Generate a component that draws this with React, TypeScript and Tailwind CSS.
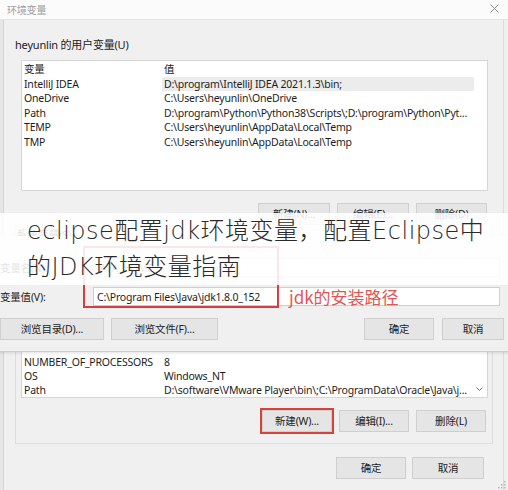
import React from "react";

type BtnProps = { children: React.ReactNode; className?: string };

function Btn({ children, className = "" }: BtnProps) {
  return (
    <div
      className={`flex items-center justify-center h-[22px] bg-[#e5e5e5] border border-[#cfcfcf] text-[10.5px] text-[#222] whitespace-nowrap ${className}`}
    >
      {children}
    </div>
  );
}

type Row = { k: string; v: string; sel?: boolean };

const userRows: Row[] = [
  { k: "IntelliJ IDEA", v: "D:\\program\\IntelliJ IDEA 2021.1.3\\bin;", sel: true },
  { k: "OneDrive", v: "C:\\Users\\heyunlin\\OneDrive" },
  { k: "Path", v: "D:\\program\\Python\\Python38\\Scripts\\;D:\\program\\Python\\Pyt..." },
  { k: "TEMP", v: "C:\\Users\\heyunlin\\AppData\\Local\\Temp" },
  { k: "TMP", v: "C:\\Users\\heyunlin\\AppData\\Local\\Temp" },
];

const sysRows: Row[] = [
  { k: "NUMBER_OF_PROCESSORS", v: "8" },
  { k: "OS", v: "Windows_NT" },
  { k: "Path", v: "D:\\software\\VMware Player\\bin\\;C:\\ProgramData\\Oracle\\Java\\j..." },
];

export default function App() {
  return (
    <div className="relative w-[508px] h-[490px] overflow-hidden bg-[#f0f0f0] text-[10.5px] leading-[16px] tracking-[-0.2px] text-[#1e1e1e] font-['Noto_Sans','Noto_Sans_CJK_SC',sans-serif]">
      {/* Title bar */}
      <div className="h-[20px] bg-[#fbfbfb] border-b border-[#e4e4e4] flex items-center justify-between pl-[7px] pr-[9px]">
        <span className="text-[#a0a0a0] text-[10px]">环境变量</span>
        <svg width="9" height="9" viewBox="0 0 9 9" className="mt-[-3px]">
          <path d="M0.5 0.5 L8.5 8.5 M8.5 0.5 L0.5 8.5" stroke="#8a8a8a" strokeWidth="1" />
        </svg>
      </div>

      {/* Window body */}
      <div className="h-[470px] flex flex-col shadow-[inset_3px_0_0_#e6e6e6,inset_4px_0_0_#d5d5d5,inset_-4px_0_0_#f0f0f0,inset_-5px_0_0_#dadada]">
        <div className="pl-[15px] pt-[17px] h-[40px] text-[11px] text-[#222]">heyunlin 的用户变量(U)</div>

        {/* User list */}
        <div className="ml-[21px] w-[467px] h-[131px] bg-white border border-[#d6d6d6] pt-[1px]">
          <div className="flex h-[14.5px] items-center">
            <div className="w-[142px] pl-[2px]">变量</div>
            <div>值</div>
          </div>
          {userRows.map((r) => (
            <div key={r.k} className="flex h-[14.5px] items-center">
              <div className="w-[140px] pl-[2px] whitespace-nowrap">{r.k}</div>
              <div
                className={`w-[312px] pl-[2px] h-full flex items-center whitespace-nowrap ${r.sel ? "bg-[#ececec]" : ""}`}
              >
                {r.v}
              </div>
            </div>
          ))}
        </div>

        {/* User buttons */}
        <div className="mt-[12px] flex justify-end pr-[21px] gap-[7px]">
          <Btn className="w-[72px]">新建(N)...</Btn>
          <Btn className="w-[72px]">编辑(E)...</Btn>
          <Btn className="w-[71px]">删除(D)</Btn>
        </div>

        {/* System section frame */}
        <div className="mx-[15px] border-x border-b border-[#dcdcdc] flex flex-col">
          <div className="h-[20px] pt-[2px] text-[11px] text-[#222]">系统变量(S)</div>
          <div className="ml-[5px] w-[467px] h-[153px] bg-white border border-[#d6d6d6] flex flex-col justify-end relative">
            {sysRows.map((r) => (
              <div key={r.k} className="flex h-[14px] items-center">
                <div className="w-[142px] pl-[2px] whitespace-nowrap">{r.k}</div>
                <div className="whitespace-nowrap">{r.v}</div>
              </div>
            ))}
            <svg width="7" height="5" viewBox="0 0 7 5" className="absolute right-[4px] bottom-[5px]">
              <path d="M0.5 0.5 L3.5 3.5 L6.5 0.5" stroke="#777" strokeWidth="1" fill="none" />
            </svg>
          </div>
          <div className="mt-[12px] mb-[11px] flex justify-end pr-[6px] gap-[7px]">
            <Btn className="w-[70px] ring-2 ring-[#d8423d]">新建(W)...</Btn>
            <Btn className="w-[70px]">编辑(I)...</Btn>
            <Btn className="w-[70px]">删除(L)</Btn>
          </div>
        </div>

        {/* Bottom buttons */}
        <div className="mt-[13px] flex justify-end pr-[24px] gap-[6px]">
          <Btn className="w-[70px]">确定</Btn>
          <Btn className="w-[72px]">取消</Btn>
        </div>
      </div>

      {/* Resize grip */}
      <svg width="10" height="10" viewBox="0 0 10 10" className="absolute right-[2px] bottom-[1px]">
        <rect x="8" y="8" width="1.5" height="1.5" fill="#b5b5b5" />
        <rect x="5" y="8" width="1.5" height="1.5" fill="#b5b5b5" />
        <rect x="8" y="5" width="1.5" height="1.5" fill="#b5b5b5" />
        <rect x="2" y="8" width="1.5" height="1.5" fill="#b5b5b5" />
        <rect x="5" y="5" width="1.5" height="1.5" fill="#b5b5b5" />
        <rect x="8" y="2" width="1.5" height="1.5" fill="#b5b5b5" />
      </svg>

      {/* Edit system variable dialog (overlapping window) */}
      <div className="absolute left-[-10px] top-[236px] w-[528px] bg-[#f0f0f0] border-b border-[#cdcdcd] shadow-[0_1px_3px_rgba(0,0,0,0.12)] pl-[10px] pt-[22px] pb-[11px]">
        <div className="flex h-[19px] items-center">
          <div className="w-[93px] whitespace-nowrap">变量名(N):</div>
          <div className="w-[407px] h-[19px] bg-white border border-[#cfcfcf] pl-[3px] flex items-center text-[#333]">JAVA_HOME</div>
        </div>
        <div className="flex h-[19px] items-center mt-[10px]">
          <div className="w-[93px] whitespace-nowrap">变量值(V):</div>
          <div className="w-[407px] h-[19px] bg-white border border-[#cfcfcf] pl-[3px] flex items-center whitespace-nowrap">
            C:\Program Files\Java\jdk1.8.0_152
          </div>
        </div>
        <div className="mt-[12px] flex pr-[14px]">
          <div className="flex gap-[7px]">
            <Btn className="w-[104px]">浏览目录(D)...</Btn>
            <Btn className="w-[107px]">浏览文件(F)...</Btn>
          </div>
          <div className="ml-auto flex gap-[8px]">
            <Btn className="w-[70px]">确定</Btn>
            <Btn className="w-[62px]">取消</Btn>
          </div>
        </div>

        {/* red annotation box */}
        <div className="absolute left-[93px] top-[10px] w-[196px] h-[62px] border-2 border-[#d23f3f]" />
        <div className="absolute left-[299px] top-[50px] text-[17px] leading-[22px] tracking-normal text-[#e05656] whitespace-nowrap font-['Noto_Sans_CJK_SC',sans-serif]">
          jdk的安装路径
        </div>
      </div>

      {/* Caption overlay */}
      <div className="absolute left-0 top-[213px] w-full h-[72px] bg-white/[0.88] pl-[27px] font-['DejaVu_Sans','Noto_Sans_CJK_SC',sans-serif] font-extralight tracking-[0.5px] text-[24px] leading-[36px] text-[#2a2a2a]">
        <div className="whitespace-nowrap">eclipse配置jdk环境变量，配置Eclipse中</div>
        <div className="whitespace-nowrap">的JDK环境变量指南</div>
      </div>
    </div>
  );
}
